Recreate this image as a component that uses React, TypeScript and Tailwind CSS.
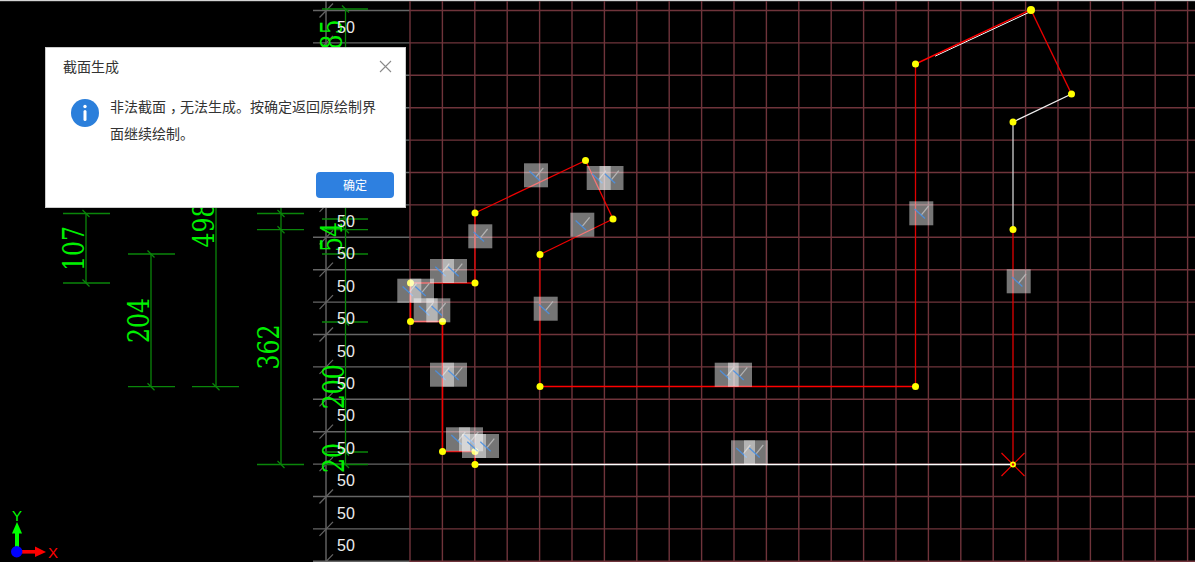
// Section-drawing canvas with the "illegal section" alert dialog on top.
const GRID_STEP = 32.4
const rowYs = Array.from({ length: 18 }, (_, i) => 10.5 + GRID_STEP * i)
const colXs = Array.from({ length: 25 }, (_, i) => 410 + GRID_STEP * i)

const GRID_RED = '#6f343b'
const AXIS_GRAY = '#666666'
const DIM_GREEN = '#0a860a'
const TEXT_GREEN = '#00f000'
const SANS = "'Liberation Sans', sans-serif"

type Pt = [number, number]

// Outline segments: [from, to, colour, width]
const segments: [Pt, Pt, string, number][] = [
  [[935, 56.2], [1029, 12.4], '#ffffff', 1],
  [[915.5, 64], [1031, 9.6], '#ff0000', 1.4],
  [[1031, 10], [1071.5, 94], '#e80000', 1.4],
  [[1071.5, 94], [1013, 122], '#f0f0f0', 1.3],
  [[1013, 122], [1013, 229.5], '#d0d0d0', 1.3],
  [[1013, 229.5], [1013, 464.5], '#e00000', 1.3],
  [[915.5, 64], [915.5, 386.5], '#e00000', 1.3],
  [[915.5, 386.5], [540, 386.5], '#ff0000', 1.5],
  [[540, 386.5], [540, 254.5], '#d00000', 1.3],
  [[540, 254.5], [613, 219], '#f00000', 1.3],
  [[613, 219], [585.5, 160.5], '#f00000', 1.3],
  [[585.5, 160.5], [475, 213], '#f00000', 1.3],
  [[475, 213], [475, 283], '#e00000', 1.3],
  [[475, 283], [410.5, 283], '#e00000', 1.3],
  [[410.5, 283], [410.5, 321.5], '#ff0000', 1.6],
  [[410.5, 321.5], [442.5, 321.5], '#ff0000', 1.6],
  [[442.5, 321.5], [442.5, 451.5], '#ee0000', 1.5],
  [[442.5, 451.5], [475, 451.5], '#e00000', 1.3],
  [[475, 451.5], [475, 464.5], '#e00000', 1.3],
  [[475, 464.5], [1013, 464.5], '#ffffff', 1.6],
]

const nodes: Pt[] = [
  [1031, 10], [915.5, 64], [1071.5, 94], [1013, 122], [1013, 229.5], [915.5, 386.5], [540, 386.5],
  [540, 254.5], [613, 219], [585.5, 160.5], [475, 213], [475, 283], [410.5, 283], [410.5, 321.5],
  [442.5, 321.5], [442.5, 451.5], [475, 451.5], [475, 464.5],
]

const patches: Pt[] = [
  [524, 163.3], [586.7, 166], [599.5, 166], [570.3, 212.7], [468.3, 224.3], [430, 259], [443, 259],
  [397.3, 278.7], [410, 278.7], [413.7, 298.3], [426.3, 298.3], [533.7, 296.7], [430, 362.7], [443, 362.7],
  [446, 427.3], [459, 427.3], [462, 434], [475, 434], [714.7, 362.7], [728, 362.7], [731, 440.3], [744, 440.3],
  [909.3, 201.3], [1006.7, 269.3],
]

// Dimension lines: vertical at x from y1 to y2 with extension lines at the given ys.
const dimensions = [
  { x: 86, x1: 63, x2: 110, y1: 213.5, y2: 283, ticks: [213.5, 283] },
  { x: 151, x1: 128, x2: 175, y1: 254, y2: 386.7, ticks: [254, 386.7] },
  { x: 216, x1: 192, x2: 239, y1: 150, y2: 386.7, ticks: [386.7] },
  { x: 281, x1: 257, x2: 304, y1: 150, y2: 464.5, ticks: [213.5, 229.7, 464.5] },
  { x: 345.5, x1: 322, x2: 368, y1: 9, y2: 464.5, ticks: [9, 219, 229.7, 254, 322, 452, 464.5] },
]

const dimensionLabels = [
  { text: '107', x: 83.5, y: 248.5 },
  { text: '204', x: 148.5, y: 320.5 },
  { text: '498', x: 213.5, y: 225 },
  { text: '362', x: 278.5, y: 347 },
  { text: '185', x: 342, y: 42 },
  { text: '54', x: 342, y: 237 },
  { text: '200', x: 344, y: 386.7 },
  { text: '20', x: 344, y: 458 },
]

function Patch({ x, y }: { x: number; y: number }) {
  return (
    <g transform={`translate(${x} ${y})`}>
      <rect width="24" height="24" fill="#ffffff" fillOpacity="0.46" />
      <line x1="11.7" y1="14" x2="19.3" y2="4.7" stroke="#b4b4b4" strokeWidth="1.2" />
      <line x1="5.3" y1="7.7" x2="15.7" y2="17.3" stroke="#4a90e2" strokeWidth="1.3" strokeOpacity="0.9" />
    </g>
  )
}

function Canvas() {
  return (
    <svg width="1195" height="562" viewBox="0 0 1195 562" className="block">
      <rect x="0" y="0" width="1195" height="1.2" fill="#d4d4d4" />

      {/* grid */}
      {rowYs.map(y => (
        <g key={y}>
          <line x1="313" y1={y} x2="410" y2={y} stroke={AXIS_GRAY} strokeWidth="1.4" />
          <line x1="410" y1={y} x2="1195" y2={y} stroke={GRID_RED} strokeWidth="1.4" />
          <line x1="319.5" y1={y + 7} x2="333" y2={y - 7} stroke={AXIS_GRAY} strokeWidth="1.2" />
        </g>
      ))}
      {colXs.map(x => (
        <line key={x} x1={x} y1="1" x2={x} y2="562" stroke={GRID_RED} strokeWidth="1.4" />
      ))}
      <line x1="326" y1="1" x2="326" y2="562" stroke={AXIS_GRAY} strokeWidth="1.4" />

      {/* dimensions */}
      {dimensions.map(dim => (
        <g key={dim.x} stroke={DIM_GREEN} strokeWidth="1.3">
          <line x1={dim.x} y1={dim.y1} x2={dim.x} y2={dim.y2} />
          {dim.ticks.map(y => (
            <g key={y}>
              <line x1={dim.x1} y1={y} x2={dim.x2} y2={y} />
              <line x1={dim.x - 3.5} y1={y - 3.5} x2={dim.x + 3.5} y2={y + 3.5} />
            </g>
          ))}
        </g>
      ))}
      {dimensionLabels.map(label => (
        <text
          key={label.text}
          x={label.x}
          y={label.y}
          transform={`rotate(-90 ${label.x} ${label.y})`}
          textAnchor="middle"
          textLength={label.text.length * 15}
          lengthAdjust="spacingAndGlyphs"
          fill={TEXT_GREEN}
          fontSize="29"
          fontFamily="DejaVu Serif, serif"
        >
          {label.text}
        </text>
      ))}

      {/* spacing labels */}
      {rowYs.slice(0, 17).map(y => (
        <text key={y} x="337" y={y + 22} fill="#ececec" fontSize="16" fontFamily={SANS}>50</text>
      ))}

      {/* section outline */}
      {segments.map(([from, to, color, width], i) => (
        <line key={i} x1={from[0]} y1={from[1]} x2={to[0]} y2={to[1]} stroke={color} strokeWidth={width} />
      ))}
      {nodes.map(([x, y], i) => (
        <circle key={i} cx={x} cy={y} r={i === 0 ? 4 : 3.5} fill="#ffff00" />
      ))}

      {/* start marker */}
      <g stroke="#ee0000" strokeWidth="1.2">
        <line x1="1001.5" y1="453" x2="1024.5" y2="476" />
        <line x1="1024.5" y1="453" x2="1001.5" y2="476" />
      </g>
      <circle cx="1013" cy="464.5" r="3" fill="#ffff00" />
      <circle cx="1013" cy="464.5" r="1.2" fill="#e00000" />

      {patches.map(([x, y], i) => (
        <Patch key={i} x={x} y={y} />
      ))}

      {/* axis triad */}
      <rect x="15" y="533" width="4" height="18" fill="#00ff00" />
      <polygon points="17,522 22,533.5 12,533.5" fill="#00ff00" />
      <rect x="22" y="550" width="14" height="3.6" fill="#ff0000" />
      <polygon points="46,552 35,546.5 35,557" fill="#ff0000" />
      <circle cx="16.7" cy="551.7" r="5.7" fill="#0000ff" />
      <text x="17" y="521" textAnchor="middle" fill="#00ff00" fontSize="15" fontFamily={SANS}>Y</text>
      <text x="53" y="557.5" textAnchor="middle" fill="#ff0000" fontSize="15" fontFamily={SANS}>X</text>
    </svg>
  )
}

function InfoIcon() {
  return (
    <svg width="28" height="28" viewBox="0 0 28 28" className="shrink-0">
      <circle cx="14" cy="14" r="14" fill="#2b7fdb" />
      <circle cx="14" cy="7.5" r="1.7" fill="#ffffff" />
      <rect x="12.5" y="11" width="3" height="11" rx="1.5" fill="#ffffff" />
    </svg>
  )
}

function Dialog() {
  return (
    <div className="absolute left-[45px] top-[47px] w-[361px] h-[161px] flex flex-col bg-white border border-[#cccccc] [font-family:'Noto_Sans_CJK_SC',sans-serif] text-[#333333]">
      <div className="flex items-center justify-between h-[36px] pl-[17px] pr-[13px]">
        <span className="text-sm">截面生成</span>
        <svg width="13" height="13" viewBox="0 0 13 13">
          <path d="M1 1 L12 12 M12 1 L1 12" stroke="#8a8a8a" strokeWidth="1.1" fill="none" />
        </svg>
      </div>
      <div className="flex flex-1 gap-[11px] pl-[25px] pt-[15px]">
        <InfoIcon />
        <p className="w-[268px] -mt-[6px] text-sm leading-[27px]">
          非法截面<span className="inline-block w-[14px] pl-[4px]">，</span>无法生成。按确定返回原绘制界面继续绘制。
        </p>
      </div>
      <div className="flex justify-end pr-[11px] pb-[9px]">
        <button className="w-[78px] h-[26px] rounded bg-[#2e80e0] text-white text-xs">确定</button>
      </div>
    </div>
  )
}

export default function App() {
  return (
    <div className="relative w-[1195px] h-[562px] overflow-hidden bg-black">
      <Canvas />
      <Dialog />
    </div>
  )
}
